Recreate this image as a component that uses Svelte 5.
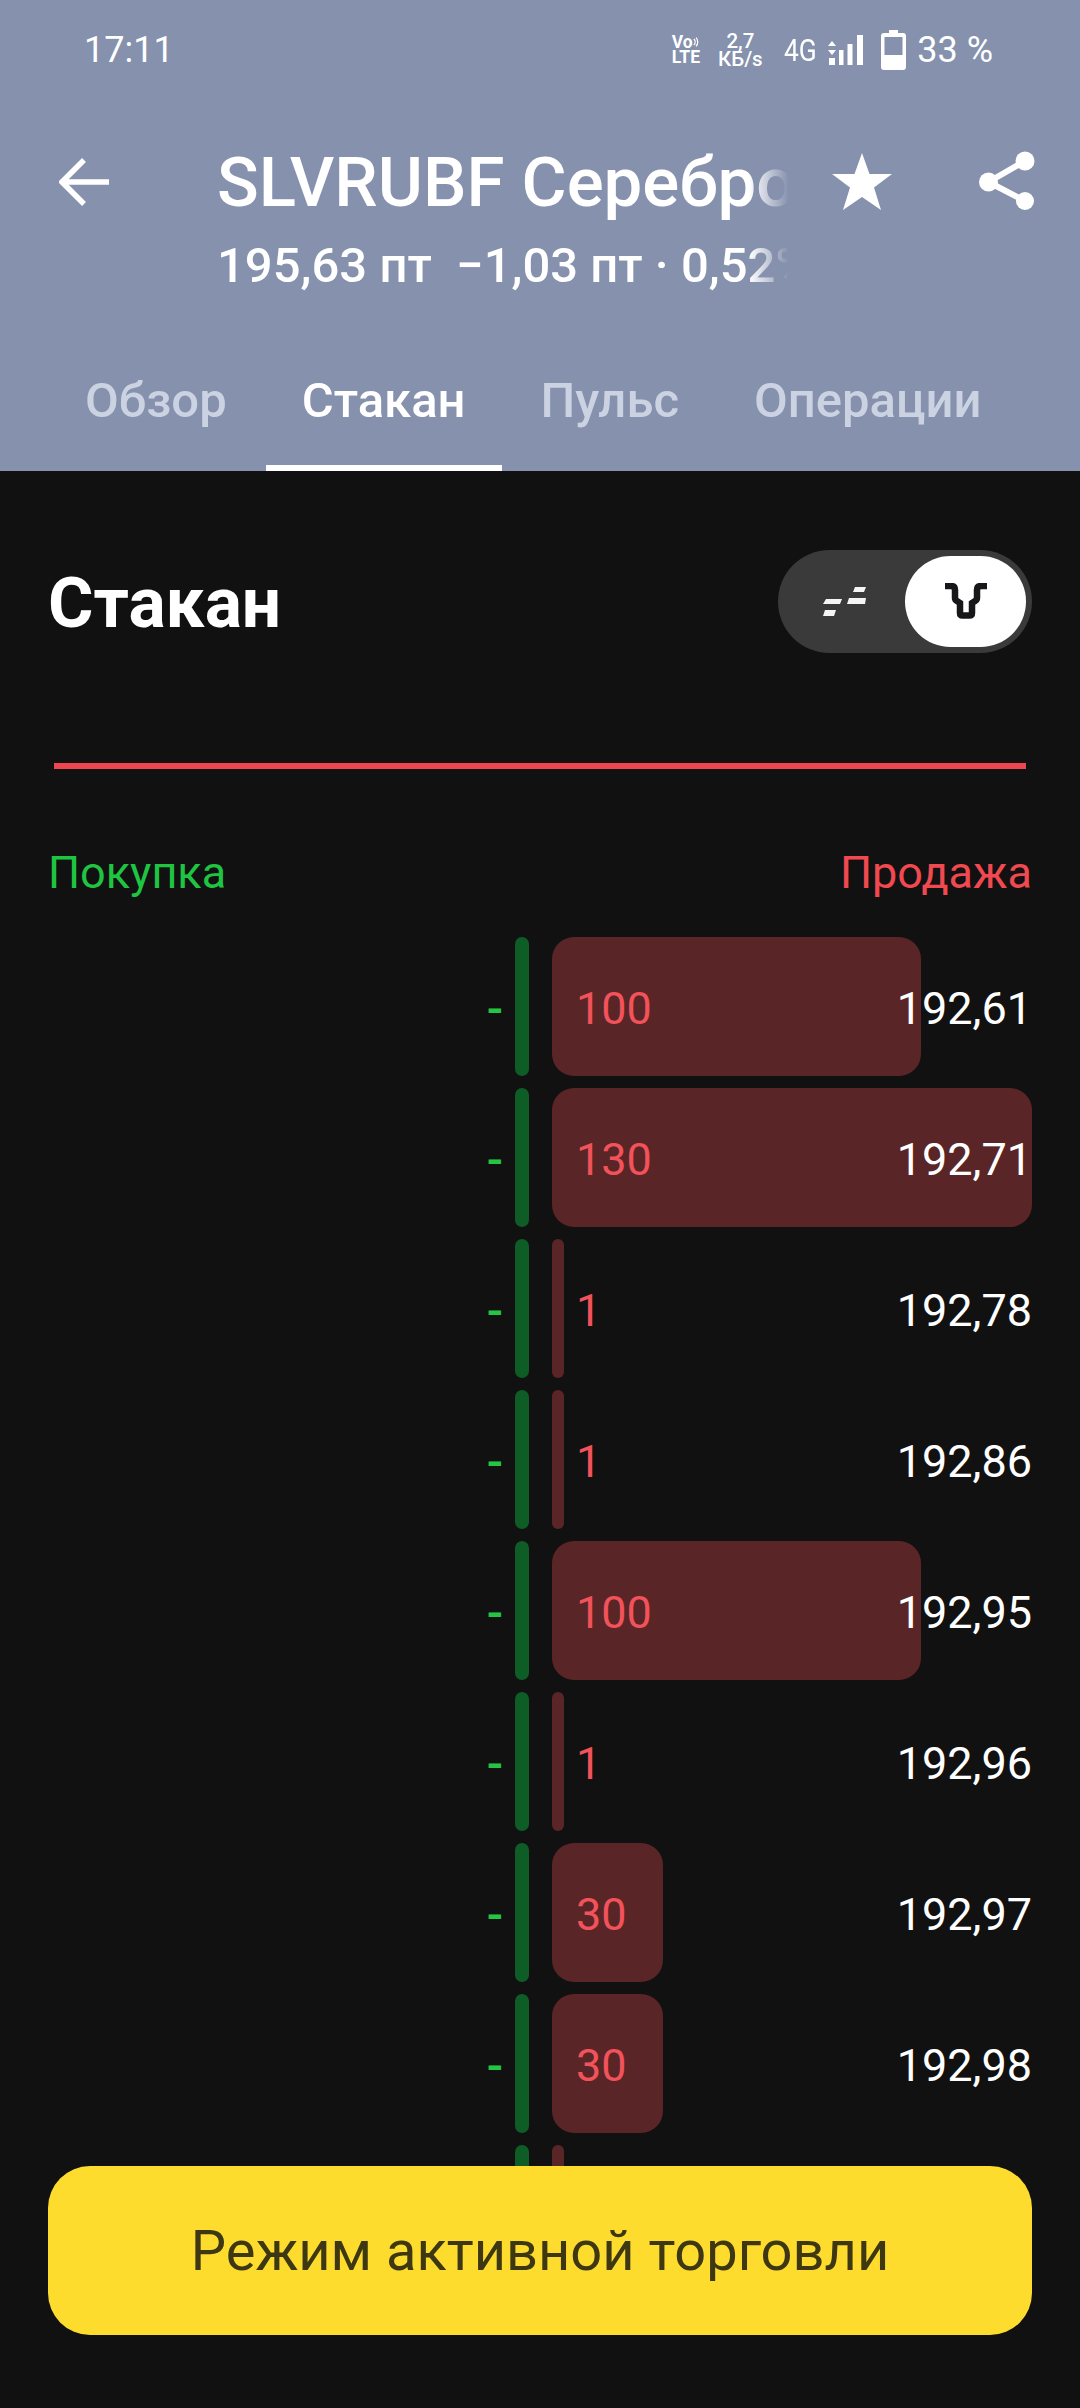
<script>
	const asks = [
		{ qty: 100, price: '192,61', w: 369 },
		{ qty: 130, price: '192,71', w: 480 },
		{ qty: 1, price: '192,78', w: 12 },
		{ qty: 1, price: '192,86', w: 12 },
		{ qty: 100, price: '192,95', w: 369 },
		{ qty: 1, price: '192,96', w: 12 },
		{ qty: 30, price: '192,97', w: 111 },
		{ qty: 30, price: '192,98', w: 111 },
		{ qty: 1, price: '192,99', w: 12 }
	];
	const tabs = ['Обзор', 'Стакан', 'Пульс', 'Операции'];
</script>

<div class="screen">
	<header class="head">
		<div class="status">
			<span class="time">17:11</span>
			<div class="sys">
				<span class="volte">Vo<svg viewBox="0 0 8 12" aria-hidden="true"><path d="M1 2.500a5 5 0 0 1 0 7M3.500 1a7.500 7.500 0 0 1 0 10" /></svg><br />LTE</span>
				<span class="speed">2,7<br />КБ/s</span>
				<span class="net">4G</span>
				<svg class="signal" viewBox="0 0 35 31" aria-hidden="true">
					<path d="M4 6l4 5H0zM4 20l4-5H0z" />
					<rect x="1" y="23" width="6" height="7" />
					<rect x="11" y="15" width="4.500" height="15" />
					<rect x="19.500" y="9" width="5" height="21" />
					<rect x="29" y="0" width="6" height="30" />
				</svg>
				<svg class="batt" viewBox="0 0 25 40" aria-hidden="true">
					<path fill-rule="evenodd" d="M8 0h9v3h5a3 3 0 0 1 3 3v31a3 3 0 0 1-3 3H3a3 3 0 0 1-3-3V6a3 3 0 0 1 3-3h5zM3.500 7v18h18V7z" />
				</svg>
				<span class="pct">33 %</span>
			</div>
		</div>

		<div class="bar">
			<svg class="back" viewBox="0 0 52 50" aria-hidden="true"><path d="M50 25H4M25 3L3 25l22 22" /></svg>
			<div class="titles">
				<div class="name">SLVRUBF Серебро</div>
				<div class="quote">195,63 пт&nbsp; −1,03 пт · 0,52%</div>
			</div>
			<svg class="star" viewBox="0 0 60 58" aria-hidden="true"><path d="M30 0l7.500 21H60L42 34.500 49 57 30 44 11 57l7-22.500L0 21h22.500z" /></svg>
			<svg class="share" viewBox="0 0 56 60" aria-hidden="true">
				<circle cx="46" cy="10" r="9.500" />
				<circle cx="9.500" cy="31" r="9.500" />
				<circle cx="46" cy="50" r="9" />
				<path d="M46 10L9.500 31 46 50" />
			</svg>
		</div>

		<nav class="tabs">
			{#each tabs as t, i}
				<span class="tab" class:on={i === 1}>{t}</span>
			{/each}
		</nav>
	</header>

	<main class="body">
		<div class="top">
			<h1>Стакан</h1>
			<div class="toggle">
				<span class="opt">
					<svg viewBox="0 0 44 31" aria-hidden="true">
						<path d="M32 1h11l-2 5H30zM26 12h17l-1 6H24zM3 13h16l-2 5H0zM2 24h11l-2 6H0z" />
					</svg>
				</span>
				<span class="opt sel">
					<svg viewBox="0 0 42 37" aria-hidden="true">
						<path d="M0 3h6q4 0 4 4v8q0 2 2 3l3 2v10q0 2.500 2.500 2.500h7q2.500 0 2.500-2.500V20l3-2q2-1 2-3V7q0-4 4-4h6" />
					</svg>
				</span>
			</div>
		</div>

		<div class="rule"></div>

		<div class="labels">
			<span class="buy">Покупка</span>
			<span class="sell">Продажа</span>
		</div>

		<div class="book">
			{#each asks as a}
				<div class="row">
					<span class="dash">-</span>
					<span class="gbar"></span>
					<div class="ask">
						<span class="fill" style="width: {a.w}px"></span>
						<span class="qty">{a.qty}</span>
						<span class="price">{a.price}</span>
					</div>
				</div>
			{/each}
		</div>
	</main>

	<button class="trade" type="button">Режим активной торговли</button>
</div>

<style>
	:global(body) { margin: 0; background: #111112; }

	.screen {
		position: relative;
		width: 1080px; height: 2408px;
		overflow: hidden;
		background: #111112;
		color: #fff;
		font-family: Roboto, "Noto Sans", sans-serif;
	}

	.head { height: 471px; background: #8591ad; display: flex; flex-direction: column; }

	.status {
		height: 100px;
		display: flex; align-items: center; justify-content: space-between;
		padding: 0 87px 0 84px;
		box-sizing: border-box;
	}
	.time { font-size: 36px; }
	.sys { display: flex; align-items: center; }
	.volte { font-size: 17.500px; font-weight: 700; line-height: 15px; white-space: nowrap; }
	.volte svg { width: 7px; height: 12px; fill: none; stroke: #fff; stroke-width: 1.500; }
	.speed { font-size: 20.500px; font-weight: 500; line-height: 18px; text-align: center; margin-left: 18px; }
	.net { font-size: 31px; margin-left: 18px; transform: scaleX(0.85); }
	.signal { width: 35px; height: 31px; margin-left: 9px; fill: #fff; }
	.batt { width: 25px; height: 40px; margin-left: 18px; fill: #fff; }
	.pct { font-size: 36px; margin-left: 11px; }

	.bar { height: 170px; display: flex; align-items: flex-start; }
	.back {
		width: 52px; height: 50px;
		margin: 57px 0 0 59px;
		fill: none; stroke: #fff; stroke-width: 5.500;
	}
	.titles {
		width: 572px; margin: 43px 0 0 106px;
		overflow: hidden; white-space: nowrap;
		mask-image: linear-gradient(90deg, #000 93%, transparent 100%);
	}
	.name { font-size: 69px; font-weight: 500; line-height: 80px; }
	.quote { font-size: 49px; font-weight: 500; line-height: 58px; margin-top: 14px; }
	.star { width: 60px; height: 58px; margin: 53px 0 0 43px; fill: #fff; }
	.share { width: 56px; height: 60px; margin: 51px 0 0 87px; fill: #fff; }
	.share path { fill: none; stroke: #fff; stroke-width: 6; }

	.tabs { flex: 1; display: flex; align-items: stretch; padding-left: 49px; gap: 3px; }
	.tab {
		display: flex; align-items: center;
		padding: 59px 36px 0;
		box-sizing: border-box;
		font-size: 49px; font-weight: 500;
		color: #cbd2e2;
	}
	.tab.on { color: #fff; box-shadow: inset 0 -6px 0 #fff; }

	.body { padding: 0 48px; }

	.top { height: 182px; display: flex; align-items: flex-start; justify-content: space-between; }
	h1 { margin: 94px 0 0; font-size: 69.500px; font-weight: 700; line-height: 78px; }
	.toggle {
		margin-top: 79px;
		width: 254px; height: 103px;
		box-sizing: border-box;
		padding: 6px;
		border-radius: 52px;
		background: #3a3a3b;
		display: flex; justify-content: flex-end; align-items: center;
	}
	.opt { flex: 1; display: flex; justify-content: center; }
	.opt svg { width: 44px; height: 31px; fill: #f5f5f5; }
	.opt.sel {
		flex: none;
		width: 121px; height: 91px;
		border-radius: 46px;
		background: #fff;
		align-items: center;
	}
	.opt.sel svg { width: 42px; height: 37px; fill: none; stroke: #17171a; stroke-width: 6.500; }

	.rule { height: 6px; margin: 110px 6px 0; background: #ee4650; }

	.labels {
		display: flex; justify-content: space-between;
		margin-top: 78px;
		font-size: 45px; line-height: 52px;
	}
	.buy { color: #1fc541; }
	.sell { color: #f0494f; }

	.book { margin-top: 38px; display: flex; flex-direction: column; gap: 12px; }
	.row { height: 139px; display: flex; align-items: stretch; }
	.dash {
		width: 467px;
		display: flex; align-items: center; justify-content: flex-end;
		padding: 3px 12px 0 0; box-sizing: border-box;
		color: #25c445; font-size: 48px; font-weight: 500;
	}
	.gbar { width: 14px; border-radius: 7px; background: #0e5c26; }
	.ask {
		flex: 1; margin-left: 23px;
		padding-top: 3px;
		display: flex; align-items: center; justify-content: space-between;
		position: relative;
	}
	.fill { position: absolute; left: 0; top: 0; bottom: 0; border-radius: 22px; background: #5a2526; }
	.qty, .price { position: relative; font-size: 45px; }
	.qty { color: #f2525a; margin-left: 24px; }
	.price { color: #fff; }

	.trade {
		position: absolute; left: 48px; top: 2166px;
		width: 984px; height: 169px;
		border: 0; border-radius: 42px;
		background: #fedc2e;
		color: #3d3712;
		font: 400 56px Roboto, sans-serif;
	}
</style>
